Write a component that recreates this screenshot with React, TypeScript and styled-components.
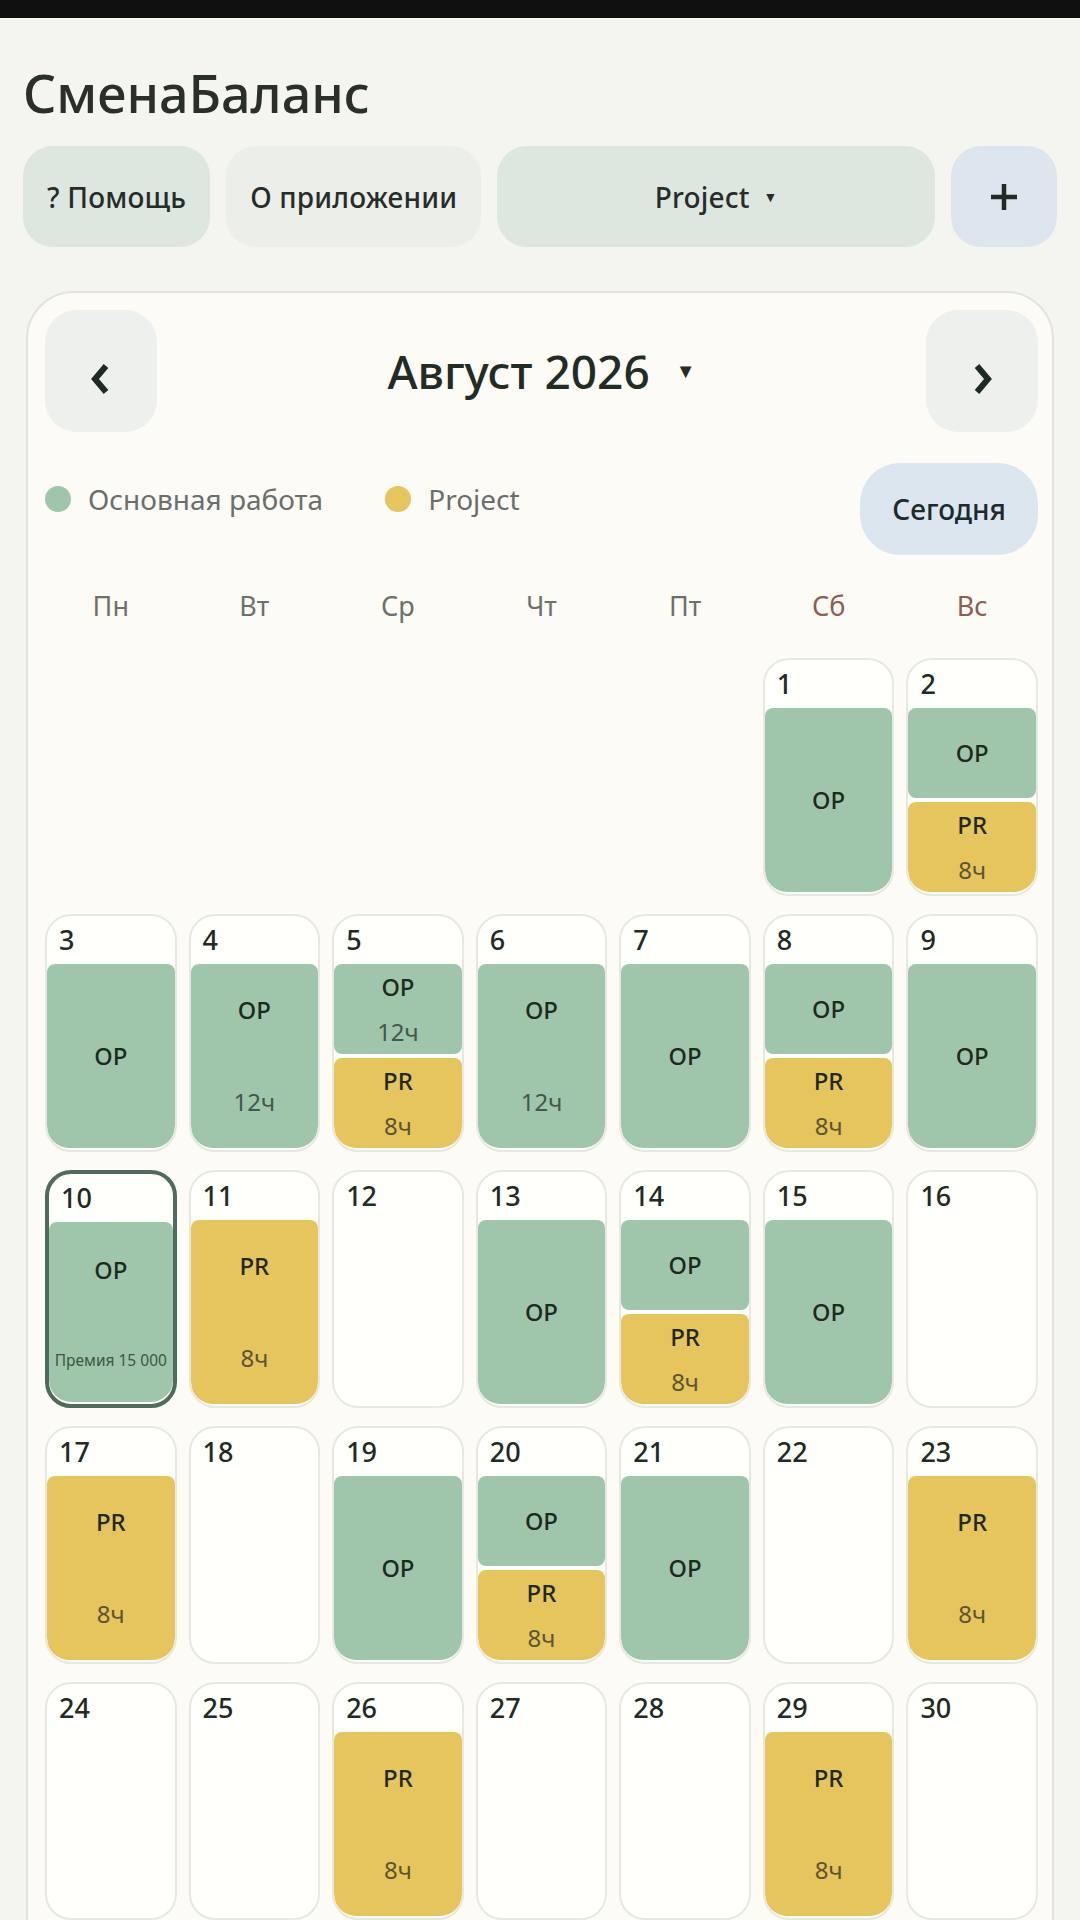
import React from 'react';
import styled, { createGlobalStyle } from 'styled-components';

const GlobalStyle = createGlobalStyle`
  html, body {
    margin: 0;
    padding: 0;
    background: #f5f5f0;
  }

  body {
    font-family: 'Noto Sans', 'Open Sans', sans-serif;
    color: #232b25;
  }

  * {
    box-sizing: border-box;
  }
`;

const StatusBar = styled.div`
  height: 18px;
  background: #0f0f0f;
`;

const Page = styled.main`
  padding: 44px 23px 40px;
`;

const Title = styled.h1`
  margin: 0;
  font-size: 52px;
  line-height: 1.2;
  font-weight: 500;
  color: #2a2f2a;
`;

const Toolbar = styled.div`
  display: flex;
  gap: 16px;
  height: 101px;
  margin-top: 22px;
`;

type Tone = 'green' | 'gray' | 'blue';

const toneColors: Record<Tone, string> = {
  green: '#dde7df',
  gray: '#eceeea',
  blue: '#dde6ee',
};

const ToolButton = styled.button<{ $tone: Tone; $grow?: boolean; $width?: number }>`
  display: flex;
  align-items: center;
  justify-content: center;
  gap: 14px;
  flex: ${({ $grow }) => ($grow ? '1' : '0 0 auto')};
  width: ${({ $width }) => ($width ? `${$width}px` : 'auto')};
  padding: 0 24px;
  border: none;
  border-radius: 30px;
  background: ${({ $tone }) => toneColors[$tone]};
  color: #262d28;
  font-family: inherit;
  font-size: 28px;
  font-weight: 500;
  letter-spacing: 0.2px;
`;

const Caret = styled.span<{ $size: number }>`
  font-size: ${({ $size }) => $size}px;
  line-height: 1;
  color: #262d28;
`;

const Card = styled.section`
  margin: 44px 3px 0;
  padding: 17px 14px 40px 17px;
  border: 2px solid #e3e3dd;
  border-radius: 48px;
  background: #fcfbf6;
`;

const Header = styled.div`
  display: flex;
  align-items: center;
  justify-content: space-between;
`;

const NavButton = styled.button`
  display: flex;
  align-items: center;
  justify-content: center;
  width: 112px;
  height: 122px;
  padding: 16px 0 0;
  border: none;
  border-radius: 32px;
  background: #edf0ec;
  color: #1f2a24;
`;

const MonthTitle = styled.div`
  display: flex;
  align-items: center;
  gap: 26px;
  font-size: 46px;
  font-weight: 500;
  color: #232b25;
`;

const LegendRow = styled.div`
  display: flex;
  align-items: flex-start;
  justify-content: space-between;
  margin-top: 31px;
`;

const Legend = styled.div`
  display: flex;
  align-items: center;
  gap: 62px;
  padding-top: 17px;
`;

const LegendItem = styled.div`
  display: flex;
  align-items: center;
  gap: 17px;
  font-size: 28px;
  line-height: 38px;
  color: #6b6f6a;
`;

const Dot = styled.span<{ $color: string }>`
  width: 26px;
  height: 26px;
  border-radius: 50%;
  background: ${({ $color }) => $color};
`;

const TodayButton = styled.button`
  height: 92px;
  padding: 0 32px;
  border: none;
  border-radius: 40px;
  background: #dce6ee;
  color: #1f2a2a;
  font-family: inherit;
  font-size: 28px;
  font-weight: 500;
`;

const WeekRow = styled.div`
  display: grid;
  grid-template-columns: repeat(7, 1fr);
  column-gap: 12px;
  margin-top: 32px;
`;

const WeekDay = styled.div<{ $weekend?: boolean }>`
  text-align: center;
  font-size: 27px;
  line-height: 38px;
  color: ${({ $weekend }) => ($weekend ? '#8c5d52' : '#6d706b')};
`;

const Grid = styled.div`
  display: grid;
  grid-template-columns: repeat(7, 1fr);
  column-gap: 12px;
  row-gap: 18px;
  margin-top: 33px;
`;

const DayCell = styled.div<{ $today?: boolean }>`
  display: flex;
  flex-direction: column;
  height: 238px;
  overflow: hidden;
  padding-bottom: 2px;
  border: ${({ $today }) => ($today ? '4px solid #4e6b5c' : '2px solid #e8e8e2')};
  border-radius: 26px;
  background: #fffffc;
`;

const DayNumber = styled.div`
  padding: 7px 12px 0;
  font-size: 27px;
  line-height: 33px;
  font-weight: 500;
  color: #222a24;
`;

const Shifts = styled.div`
  display: flex;
  flex: 1;
  flex-direction: column;
  gap: 4px;
  margin-top: 8px;
`;

type Kind = 'op' | 'pr';

const kindColors: Record<Kind, { bg: string; sub: string }> = {
  op: { bg: '#9fc6aa', sub: '#44584b' },
  pr: { bg: '#e6c55c', sub: '#5c5434' },
};

const ShiftBlock = styled.div<{ $kind: Kind }>`
  display: flex;
  flex: 1;
  flex-direction: column;
  align-items: center;
  justify-content: space-around;
  border-radius: 8px;
  background: ${({ $kind }) => kindColors[$kind].bg};

  &:last-child {
    border-bottom-left-radius: 22px;
    border-bottom-right-radius: 22px;
  }
`;

const ShiftCode = styled.div`
  font-size: 24px;
  line-height: 34px;
  font-weight: 500;
  color: #1d2a22;
`;

const ShiftHours = styled.div<{ $kind: Kind }>`
  font-size: 24px;
  line-height: 34px;
  color: ${({ $kind }) => kindColors[$kind].sub};
`;

const ShiftNote = styled.div`
  font-size: 15.5px;
  line-height: 22px;
  color: #3d5546;
  white-space: nowrap;
`;

type Shift = { kind: Kind; hours?: string; note?: string };

const OP: Shift = { kind: 'op' };
const OP12: Shift = { kind: 'op', hours: '12ч' };
const PR8: Shift = { kind: 'pr', hours: '8ч' };

const schedule: Record<number, Shift[]> = {
  1: [OP],
  2: [OP, PR8],
  3: [OP],
  4: [OP12],
  5: [OP12, PR8],
  6: [OP12],
  7: [OP],
  8: [OP, PR8],
  9: [OP],
  10: [{ kind: 'op', note: 'Премия 15 000' }],
  11: [PR8],
  13: [OP],
  14: [OP, PR8],
  15: [OP],
  17: [PR8],
  19: [OP],
  20: [OP, PR8],
  21: [OP],
  23: [PR8],
  26: [PR8],
  29: [PR8],
};

const weekDays = ['Пн', 'Вт', 'Ср', 'Чт', 'Пт', 'Сб', 'Вс'];
const leadingBlanks = 5;
const daysInMonth = 31;
const today = 10;

const Chevron: React.FC<{ dir: 'left' | 'right' }> = ({ dir }) => (
  <svg width="22" height="34" viewBox="0 0 22 34">
    <path
      d={dir === 'left' ? 'M16 4 L5 17 L16 30' : 'M6 4 L17 17 L6 30'}
      fill="none"
      stroke="currentColor"
      strokeWidth="6"
      strokeLinejoin="miter"
    />
  </svg>
);

const PlusIcon = () => (
  <svg width="30" height="30" viewBox="0 0 30 30">
    <path d="M15 2 V28 M2 15 H28" stroke="#1f2a24" strokeWidth="4.5" />
  </svg>
);

const App: React.FC = () => {
  const cells: (number | null)[] = [
    ...Array.from({ length: leadingBlanks }, () => null),
    ...Array.from({ length: daysInMonth }, (_, i) => i + 1),
  ];

  return (
    <>
      <GlobalStyle />
      <StatusBar />
      <Page>
        <Title>СменаБаланс</Title>

        <Toolbar>
          <ToolButton $tone="green">? Помощь</ToolButton>
          <ToolButton $tone="gray">О приложении</ToolButton>
          <ToolButton $tone="green" $grow>
            Project <Caret $size={14}>▼</Caret>
          </ToolButton>
          <ToolButton $tone="blue" $width={106}>
            <PlusIcon />
          </ToolButton>
        </Toolbar>

        <Card>
          <Header>
            <NavButton aria-label="Предыдущий месяц">
              <Chevron dir="left" />
            </NavButton>
            <MonthTitle>
              Август 2026 <Caret $size={20}>▼</Caret>
            </MonthTitle>
            <NavButton aria-label="Следующий месяц">
              <Chevron dir="right" />
            </NavButton>
          </Header>

          <LegendRow>
            <Legend>
              <LegendItem>
                <Dot $color="#9fc6aa" />
                Основная работа
              </LegendItem>
              <LegendItem>
                <Dot $color="#e6c55c" />
                Project
              </LegendItem>
            </Legend>
            <TodayButton>Сегодня</TodayButton>
          </LegendRow>

          <WeekRow>
            {weekDays.map((d, i) => (
              <WeekDay key={d} $weekend={i > 4}>
                {d}
              </WeekDay>
            ))}
          </WeekRow>

          <Grid>
            {cells.map((day, i) =>
              day === null ? (
                <div key={`blank-${i}`} />
              ) : (
                <DayCell key={day} $today={day === today}>
                  <DayNumber>{day}</DayNumber>
                  <Shifts>
                    {(schedule[day] || []).map((s, j) => (
                      <ShiftBlock key={j} $kind={s.kind}>
                        <ShiftCode>{s.kind === 'op' ? 'ОР' : 'PR'}</ShiftCode>
                        {s.hours && <ShiftHours $kind={s.kind}>{s.hours}</ShiftHours>}
                        {s.note && <ShiftNote>{s.note}</ShiftNote>}
                      </ShiftBlock>
                    ))}
                  </Shifts>
                </DayCell>
              ),
            )}
          </Grid>
        </Card>
      </Page>
    </>
  );
};

export default App;
